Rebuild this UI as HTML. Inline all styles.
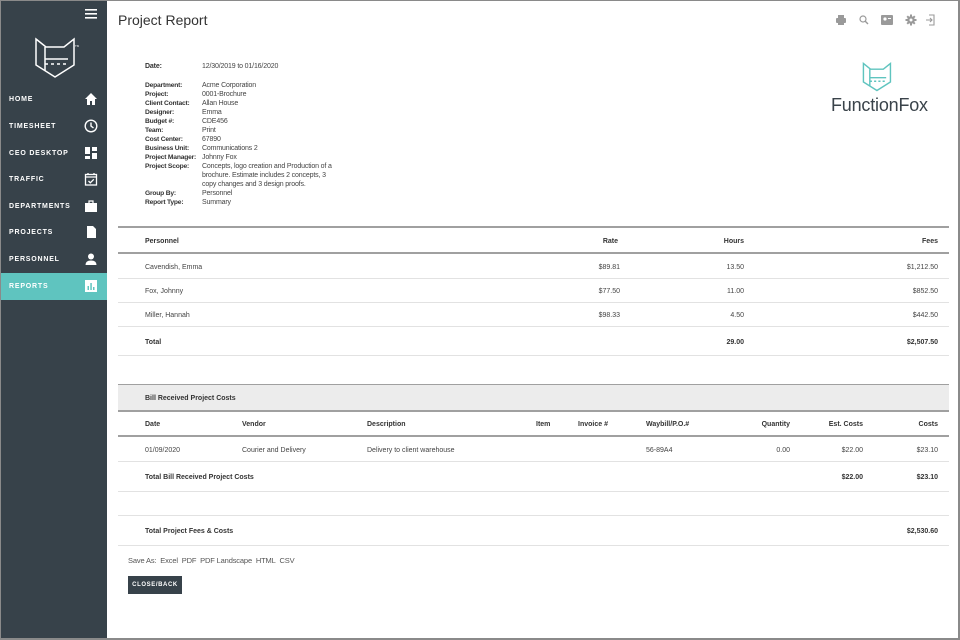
<!DOCTYPE html>
<html><head><meta charset="utf-8"><style>
*{margin:0;padding:0;box-sizing:border-box}
body{width:960px;height:640px;overflow:hidden;background:#fff;font-family:"Liberation Sans",Arial,sans-serif;position:relative;color:#333}
.frame{position:absolute;left:0;top:0;width:960px;height:640px;border:1px solid #8a8a8a;border-right-width:2px;border-bottom-width:2px;pointer-events:none;z-index:10}
.sb{position:absolute;left:0;top:0;width:107px;height:640px;background:#37424a}
.nav{position:absolute;left:0;width:107px;height:27px;color:#fff;font-size:7px;font-weight:bold;letter-spacing:0.8px}
.nav span{position:absolute;left:9px;top:10px}
.nav svg{position:absolute;left:84px;top:6px}
.nav.act{background:#5fc4bf}
.a{position:absolute;font-size:7px;white-space:nowrap;color:#444;margin-top:2px}
.m{margin-top:0;letter-spacing:-0.15px}
.b{font-weight:bold;color:#333}
.r{text-align:right}
.ln{position:absolute;left:118px;width:831px;height:1px;background:#e2e2e2}
.tk{height:2px;background:#a0a0a0}
</style></head><body>
<div class="sb">
<svg style="position:absolute;left:85px;top:9px" width="12" height="10"><rect y="0" width="12" height="1.6" fill="#fff"/><rect y="4" width="12" height="1.6" fill="#fff"/><rect y="8" width="12" height="1.6" fill="#fff"/></svg>
<svg style="position:absolute;left:34px;top:37px" width="45" height="42" viewBox="0 0 45 42" fill="none" stroke="#fff" stroke-width="1.5"><path d="M2 2 L12 10 L30 10 L40 2 L40 28 L21 40 L2 28 Z"/><path d="M11 10 L11 34"/><path d="M11 22 L34 22"/><path d="M11 27 L34 27" stroke-dasharray="3 3"/><text x="41" y="10" font-size="3" fill="#fff" stroke="none">TM</text></svg>
<div class="nav" style="top:86px"><span>HOME</span><svg width="14" height="14" viewBox="0 0 14 14"><path d="M1 7 L7 1 L13 7 L11 7 L11 13 L8 13 L8 9 L6 9 L6 13 L3 13 L3 7Z" fill="#fff"/></svg></div>
<div class="nav" style="top:113px"><span>TIMESHEET</span><svg width="14" height="14" viewBox="0 0 14 14" fill="none" stroke="#fff" stroke-width="1.4"><circle cx="7" cy="7" r="5.8"/><path d="M7 3.5 L7 7 L9.5 9"/></svg></div>
<div class="nav" style="top:140px"><span>CEO DESKTOP</span><svg width="14" height="14" viewBox="0 0 14 14" fill="#fff"><rect x="1" y="1" width="5" height="7"/><rect x="8" y="1" width="5" height="4"/><rect x="1" y="10" width="5" height="3"/><rect x="8" y="7" width="5" height="6"/></svg></div>
<div class="nav" style="top:166px"><span>TRAFFIC</span><svg width="14" height="14" viewBox="0 0 14 14" fill="none" stroke="#fff" stroke-width="1.3"><rect x="1.5" y="2.5" width="11" height="10.5"/><path d="M1.5 5 L12.5 5 M4 1 L4 3 M10 1 L10 3 M4.5 9 L6.3 10.8 L9.8 7.3"/></svg></div>
<div class="nav" style="top:193px"><span>DEPARTMENTS</span><svg width="14" height="14" viewBox="0 0 14 14" fill="#fff"><rect x="1" y="4" width="12" height="9"/><path d="M5 4 L5 2 L9 2 L9 4" stroke="#fff" fill="none" stroke-width="1.2"/></svg></div>
<div class="nav" style="top:219px"><span>PROJECTS</span><svg width="14" height="14" viewBox="0 0 14 14" fill="#fff"><path d="M3 1 L9 1 L12 4 L12 13 L3 13Z"/></svg></div>
<div class="nav" style="top:246px"><span>PERSONNEL</span><svg width="14" height="14" viewBox="0 0 14 14" fill="#fff"><circle cx="7" cy="4.5" r="3"/><path d="M1.5 13 Q1.5 8.5 7 8.5 Q12.5 8.5 12.5 13Z"/></svg></div>
<div class="nav act" style="top:273px"><span>REPORTS</span><svg width="14" height="14" viewBox="0 0 14 14"><rect x="1" y="1" width="12" height="12" fill="#fff"/><rect x="3.5" y="7" width="1.5" height="4" fill="#5fc4bf"/><rect x="6.3" y="4" width="1.5" height="7" fill="#5fc4bf"/><rect x="9" y="8" width="1.5" height="3" fill="#5fc4bf"/></svg></div>
</div>

<div style="position:absolute;left:118px;top:12px;font-size:14px;color:#333">Project Report</div>
<svg style="position:absolute;left:835px;top:14px" width="110" height="12" viewBox="0 0 110 12" fill="#9a9a9a">
<rect x="1" y="4" width="10" height="5" rx="1"/><rect x="3" y="1" width="6" height="3"/><rect x="3" y="8" width="6" height="3"/>
<circle cx="28" cy="5" r="3" fill="none" stroke="#9a9a9a" stroke-width="1.2"/><path d="M30 7 L33 10" stroke="#9a9a9a" stroke-width="1.4"/>
<rect x="46" y="1" width="12" height="10" rx="1"/><circle cx="50" cy="5" r="1.6" fill="#fff"/><rect x="53" y="4" width="3" height="1" fill="#fff"/>
<circle cx="76" cy="6" r="3.8"/><path d="M76 0.5 L76 11.5 M70.5 6 L81.5 6 M72.2 2.2 L79.8 9.8 M79.8 2.2 L72.2 9.8" stroke="#9a9a9a" stroke-width="2"/><circle cx="76" cy="6" r="1.5" fill="#fff"/>
<path d="M94 1 L99 1 L99 11 L94 11 M91 6 L97 6 M95 4 L97 6 L95 8" fill="none" stroke="#9a9a9a" stroke-width="1.1"/>
</svg>

<svg style="position:absolute;left:862px;top:61px" width="32" height="32" viewBox="0 0 45 42" fill="none" stroke="#5fc4bf" stroke-width="2"><path d="M2 2 L12 10 L30 10 L40 2 L40 28 L21 40 L2 28 Z"/><path d="M11 10 L11 34"/><path d="M11 22 L34 22"/><path d="M11 27 L34 27" stroke-dasharray="3 3"/></svg>
<div style="position:absolute;left:831px;top:95px;font-size:18px;color:#3a434a;letter-spacing:-0.2px">FunctionFox</div>

<div class="a b m" style="left:145px;top:63px">Date:</div><div class="a m" style="left:202px;top:63px">12/30/2019 to 01/16/2020</div>
<div class="a b m" style="left:145px;top:81px;line-height:9px;font-size:6.7px;letter-spacing:-0.2px">Department:<br>Project:<br>Client Contact:<br>Designer:<br>Budget #:<br>Team:<br>Cost Center:<br>Business Unit:<br>Project Manager:<br>Project Scope:<br><br><br>Group By:<br>Report Type:</div>
<div class="a m" style="left:202px;top:81px;line-height:9px">Acme Corporation<br>0001-Brochure<br>Allan House<br>Emma<br>CDE456<br>Print<br>67890<br>Communications 2<br>Johnny Fox<br>Concepts, logo creation and Production of a<br>brochure. Estimate includes 2 concepts, 3<br>copy changes and 3 design proofs.<br>Personnel<br>Summary</div>

<div class="ln tk" style="top:226px"></div>
<div class="a b" style="left:145px;top:236px">Personnel</div>
<div class="a b r" style="left:560px;width:58px;top:236px">Rate</div>
<div class="a b r" style="left:680px;width:64px;top:236px">Hours</div>
<div class="a b r" style="left:860px;width:78px;top:236px">Fees</div>
<div class="ln tk" style="top:252px"></div>
<div class="a" style="left:145px;top:262px">Cavendish, Emma</div><div class="a r" style="left:560px;width:60px;top:262px">$89.81</div><div class="a r" style="left:680px;width:64px;top:262px">13.50</div><div class="a r" style="left:860px;width:78px;top:262px">$1,212.50</div>
<div class="ln" style="top:278px"></div>
<div class="a" style="left:145px;top:286px">Fox, Johnny</div><div class="a r" style="left:560px;width:60px;top:286px">$77.50</div><div class="a r" style="left:680px;width:64px;top:286px">11.00</div><div class="a r" style="left:860px;width:78px;top:286px">$852.50</div>
<div class="ln" style="top:302px"></div>
<div class="a" style="left:145px;top:310px">Miller, Hannah</div><div class="a r" style="left:560px;width:60px;top:310px">$98.33</div><div class="a r" style="left:680px;width:64px;top:310px">4.50</div><div class="a r" style="left:860px;width:78px;top:310px">$442.50</div>
<div class="ln" style="top:326px"></div>
<div class="a b" style="left:145px;top:337px">Total</div><div class="a b r" style="left:680px;width:64px;top:337px">29.00</div><div class="a b r" style="left:860px;width:78px;top:337px">$2,507.50</div>
<div class="ln" style="top:355px"></div>

<div style="position:absolute;left:118px;top:384px;width:831px;height:26px;background:#ececec;border-top:1px solid #a0a0a0"></div>
<div class="a b" style="left:145px;top:393px">Bill Received Project Costs</div>
<div class="ln tk" style="top:410px"></div>
<div class="a b" style="left:145px;top:419px">Date</div>
<div class="a b" style="left:242px;top:419px">Vendor</div>
<div class="a b" style="left:367px;top:419px">Description</div>
<div class="a b" style="left:536px;top:419px">Item</div>
<div class="a b" style="left:578px;top:419px">Invoice #</div>
<div class="a b" style="left:646px;top:419px">Waybill/P.O.#</div>
<div class="a b r" style="left:730px;width:60px;top:419px">Quantity</div>
<div class="a b r" style="left:800px;width:63px;top:419px">Est. Costs</div>
<div class="a b r" style="left:880px;width:58px;top:419px">Costs</div>
<div class="ln tk" style="top:435px"></div>
<div class="a" style="left:145px;top:445px">01/09/2020</div>
<div class="a" style="left:242px;top:445px">Courier and Delivery</div>
<div class="a" style="left:367px;top:445px">Delivery to client warehouse</div>
<div class="a" style="left:646px;top:445px">56-89A4</div>
<div class="a r" style="left:730px;width:60px;top:445px">0.00</div>
<div class="a r" style="left:800px;width:63px;top:445px">$22.00</div>
<div class="a r" style="left:880px;width:58px;top:445px">$23.10</div>
<div class="ln" style="top:461px"></div>
<div class="a b" style="left:145px;top:472px">Total Bill Received Project Costs</div>
<div class="a b r" style="left:800px;width:63px;top:472px">$22.00</div>
<div class="a b r" style="left:880px;width:58px;top:472px">$23.10</div>
<div class="ln" style="top:491px"></div>
<div class="ln" style="top:515px"></div>
<div class="a b" style="left:145px;top:526px">Total Project Fees &amp; Costs</div>
<div class="a b r" style="left:860px;width:78px;top:526px">$2,530.60</div>
<div class="ln" style="top:545px"></div>

<div class="a m" style="left:128px;top:556px;font-size:7.5px;color:#555">Save As:&nbsp; Excel&nbsp; PDF&nbsp; PDF Landscape&nbsp; HTML&nbsp; CSV</div>
<div style="position:absolute;left:128px;top:576px;width:54px;height:18px;background:#37424a;color:#fff;font-size:6px;font-weight:bold;letter-spacing:0.6px;text-align:center;line-height:18px">CLOSE/BACK</div>
<div class="frame"></div>
</body></html>
